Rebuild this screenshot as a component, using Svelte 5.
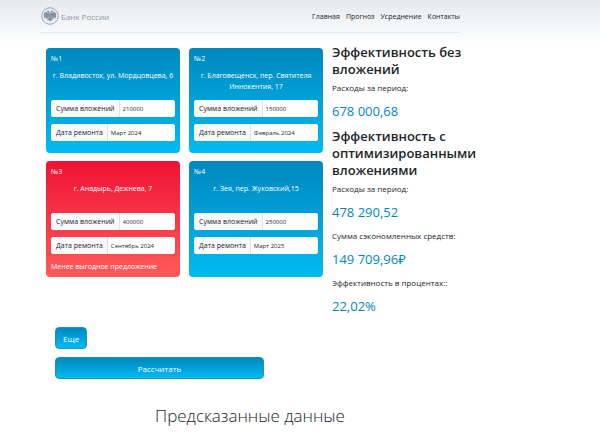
<script lang="ts">
  interface Offer {
    id: number;
    address: string;
    sum: string;
    date: string;
    worst?: boolean;
  }

  const links = ['Главная', 'Прогноз', 'Усреднение', 'Контакты'];

  let offers = $state<Offer[]>([
    { id: 1, address: 'г. Владивосток, ул. Мордцовцева, 6', sum: '210000', date: 'Март 2024' },
    { id: 2, address: 'г. Благовещенск, пер. Святителя Иннокентия, 17', sum: '150000', date: 'Февраль 2024' },
    { id: 3, address: 'г. Анадырь, Дежнева, 7', sum: '400000', date: 'Сентябрь 2024', worst: true },
    { id: 4, address: 'г. Зея, пер. Жуковский,15', sum: '250000', date: 'Март 2025' }
  ]);

  const results = [
    {
      title: 'Эффективность без вложений',
      rows: [{ label: 'Расходы за период:', value: '678 000,68' }]
    },
    {
      title: 'Эффективность с оптимизированными вложениями',
      rows: [
        { label: 'Расходы за период:', value: '478 290,52' },
        { label: 'Сумма сэкономленных средств:', value: '149 709,96₽' },
        { label: 'Эффективность в процентах::', value: '22,02%' }
      ]
    }
  ];
</script>

<div class="page">
  <header class="header">
    <a class="brand" href="#home">
      <svg class="brand-logo" width="18" height="18" viewBox="0 0 36 36" fill="none" aria-hidden="true">
        <circle cx="18" cy="18" r="16.5" stroke="currentColor" stroke-width="1.6" />
        <g fill="currentColor">
          <!-- wings -->
          <path d="M15 13C12 9 8 9 6 13C5 17 6 21 8 24L9 19L10 26L12 20L13 26L15 20Z" />
          <path d="M21 13C24 9 28 9 30 13C31 17 30 21 28 24L27 19L26 26L24 20L23 26L21 20Z" />
          <!-- heads -->
          <path d="M17 15V10C16 6 12 6 11 9L14 10L15 15Z" />
          <path d="M19 15V10C20 6 24 6 25 9L22 10L21 15Z" />
          <!-- body and tail -->
          <path d="M14 13H22L21 22L24 28L20 26L18 31L16 26L12 28L15 22Z" />
        </g>
      </svg>
      <span>Банк России</span>
    </a>
    <nav class="nav">
      {#each links as link}
        <a href="#{link}">{link}</a>
      {/each}
    </nav>
  </header>

  <main class="content">
    <div class="cards">
      {#each offers as offer (offer.id)}
        <section class="card" class:card--worst={offer.worst}>
          <div class="card-number">№{offer.id}</div>
          <p class="card-address">{offer.address}</p>
          <div class="field">
            <label for="sum-{offer.id}">Сумма вложений</label>
            <input id="sum-{offer.id}" type="text" bind:value={offer.sum} />
          </div>
          <div class="field">
            <label for="date-{offer.id}">Дата ремонта</label>
            <input id="date-{offer.id}" type="text" bind:value={offer.date} />
          </div>
          {#if offer.worst}
            <p class="card-note">Менее выгодное предложение</p>
          {/if}
        </section>
      {/each}
    </div>

    <aside class="results">
      {#each results as block}
        <section class="result">
          <h2>{block.title}</h2>
          {#each block.rows as row}
            <p class="result-label">{row.label}</p>
            <p class="result-value">{row.value}</p>
          {/each}
        </section>
      {/each}
    </aside>
  </main>

  <div class="actions">
    <button type="button" class="btn">Еще</button>
    <button type="button" class="btn btn--wide">Рассчитать</button>
  </div>

  <h1 class="title">Предсказанные данные</h1>
</div>

<style>
  :global(body) {
    margin: 0;
    background: #fff;
  }

  .page {
    font-family: 'Open Sans', 'Noto Sans', sans-serif;
    font-size: 7px;
    line-height: 11px;
    color: #212529;
    background: linear-gradient(#e6eaee, #fff 44px);
  }

  h1,
  h2,
  p {
    margin: 0;
  }

  /* Header */
  .header {
    display: flex;
    align-items: center;
    justify-content: space-between;
    height: 32px;
    margin: 0 140px 0 41px;
    border-bottom: 1px solid #e4e7f0;
  }

  .brand {
    display: flex;
    align-items: center;
    gap: 2px;
    font-size: 8px;
    color: #8e97a6;
    text-decoration: none;
  }

  .brand-logo {
    color: #8792a5;
  }

  .nav {
    display: flex;
    gap: 6px;
  }

  .nav a {
    color: #212529;
    text-decoration: none;
  }

  /* Cards and results */
  .content {
    display: grid;
    grid-template-columns: minmax(0, 277fr) minmax(0, 148fr);
    gap: 9px;
    align-items: start;
    margin: 11px 120px 0 46px;
  }

  .cards {
    display: grid;
    grid-template-columns: repeat(2, minmax(0, 1fr));
    gap: 8px 9px;
    padding-top: 4px;
  }

  .card {
    padding: 5px;
    border-radius: 4px;
    color: #fff;
    background: linear-gradient(#0088bf, #00bbf0);
  }

  .card--worst {
    background: linear-gradient(#f01235, #ff5a5a);
  }

  .card-address {
    min-height: 22px;
    margin: 6px 0 8px;
    text-align: center;
  }

  .field {
    display: flex;
    height: 17px;
    margin-bottom: 7px;
    border-radius: 3px;
    overflow: hidden;
    background: #fff;
  }

  .field label {
    padding: 0 4px 0 5px;
    line-height: 17px;
    color: #212529;
    background: #f8f9fa;
    border-right: 1px solid #dee2e6;
  }

  .field input {
    flex: 1;
    width: 0;
    padding: 0 3px;
    border: 0;
    font-family: inherit;
    font-size: 6px;
    color: #212529;
    background: #fff;
  }

  .result {
    margin-bottom: 9px;
  }

  .result:last-child {
    margin-bottom: 0;
  }

  .result h2 {
    margin-bottom: 4px;
    font-size: 13px;
    line-height: 17px;
    font-weight: 600;
  }

  .result-label {
    font-size: 8px;
  }

  .result-value {
    margin: 10px 0;
    font-size: 13px;
    line-height: 16px;
    color: #0088bf;
  }

  .result-value:last-child {
    margin-bottom: 0;
  }

  /* Buttons */
  .actions {
    display: flex;
    flex-direction: column;
    align-items: flex-start;
    gap: 8px;
    margin: 13px 336px 0 55px;
  }

  .btn {
    height: 22px;
    padding: 0 7px;
    border: 1px solid #1a8fe0;
    border-radius: 4px;
    font-family: inherit;
    font-size: 8px;
    color: #fff;
    background: linear-gradient(#0088bf, #00bbf0);
  }

  .btn--wide {
    width: 100%;
  }

  .title {
    margin: 26px 100px 0 0;
    padding-bottom: 13px;
    font-size: 17px;
    line-height: 22px;
    font-weight: 300;
    text-align: center;
  }
</style>
